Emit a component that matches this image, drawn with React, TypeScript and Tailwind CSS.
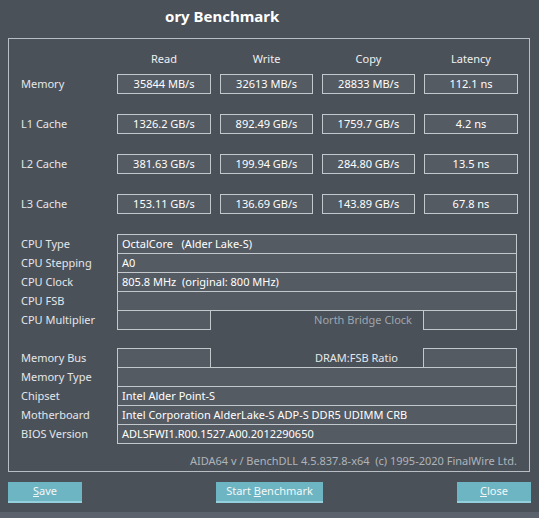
import React from 'react';

const cols = ['Read', 'Write', 'Copy', 'Latency'];

const bench: { label: string; values: string[] }[] = [
  { label: 'Memory', values: ['35844 MB/s', '32613 MB/s', '28833 MB/s', '112.1 ns'] },
  { label: 'L1 Cache', values: ['1326.2 GB/s', '892.49 GB/s', '1759.7 GB/s', '4.2 ns'] },
  { label: 'L2 Cache', values: ['381.63 GB/s', '199.94 GB/s', '284.80 GB/s', '13.5 ns'] },
  { label: 'L3 Cache', values: ['153.11 GB/s', '136.69 GB/s', '143.89 GB/s', '67.8 ns'] },
];

const Box: React.FC<{ children?: React.ReactNode }> = ({ children }) => (
  <div className="h-[20px] border border-[#c3c8cd] bg-[#555b63] flex items-center justify-center text-white">
    {children}
  </div>
);

const InfoRow: React.FC<{ label: string; value?: string; first?: boolean }> = ({ label, value, first }) => (
  <div className={`flex items-stretch h-[20px] ${first ? '' : '-mt-px'}`}>
    <div className="w-[96px] flex items-center">{label}</div>
    <div className="w-[400px] border border-[#c3c8cd] bg-[#555b63] flex items-center pl-[4px] text-white whitespace-pre">{value}</div>
  </div>
);

const Button: React.FC<{ mnemonic: string; rest: string; pre?: string; className: string }> = ({ mnemonic, rest, pre, className }) => (
  <button className={`h-[21px] bg-[#6db5c3] border-b-2 border-[#93d0dc] text-[#f2f7f8] text-[11px] ${className}`}>
    {pre}
    <span className="underline">{mnemonic}</span>
    {rest}
  </button>
);

export default function App() {
  return (
    <div
      className="w-[539px] h-[518px] bg-[#4b5159] text-[#e4e7ea] text-[11px] overflow-hidden flex flex-col"
      style={{ fontFamily: '"Noto Sans", "Open Sans", sans-serif' }}
    >
      <div className="h-[38px] pl-[165px] pt-[5px] text-[15px] font-bold text-white">ory Benchmark</div>

      <div className="ml-[8px] w-[522px] h-[434px] border border-[#b9bec4] px-[12px] pt-[10px] flex flex-col">
        <div className="grid grid-cols-[87px_94px_93px_93px_94px] gap-x-[9px] h-[20px] items-center text-[#eef0f2]">
          <div />
          {cols.map((c) => (
            <div key={c} className="text-center">{c}</div>
          ))}
        </div>

        <div className="flex flex-col gap-[20px] mt-[5px]">
          {bench.map((row) => (
            <div key={row.label} className="grid grid-cols-[87px_94px_93px_93px_94px] gap-x-[9px] items-center">
              <div>{row.label}</div>
              {row.values.map((v, i) => (
                <Box key={i}>{v}</Box>
              ))}
            </div>
          ))}
        </div>

        <div className="mt-[20px] flex flex-col">
          <InfoRow first label="CPU Type" value="OctalCore   (Alder Lake-S)" />
          <InfoRow label="CPU Stepping" value="A0" />
          <InfoRow label="CPU Clock" value="805.8 MHz  (original: 800 MHz)" />
          <InfoRow label="CPU FSB" />
          <div className="flex items-stretch h-[20px] -mt-px">
            <div className="w-[96px] flex items-center">CPU Multiplier</div>
            <div className="w-[94px] border border-[#c3c8cd] bg-[#555b63]" />
            <div className="w-[212px] flex items-center justify-end pr-[11px] text-[#9ea6ae]">North Bridge Clock</div>
            <div className="w-[94px] border border-[#c3c8cd] bg-[#555b63]" />
          </div>

          <div className="flex items-stretch h-[20px] mt-[18px]">
            <div className="w-[96px] flex items-center">Memory Bus</div>
            <div className="w-[94px] border border-[#c3c8cd] bg-[#555b63]" />
            <div className="w-[212px] flex items-center justify-end pr-[25px]">DRAM:FSB Ratio</div>
            <div className="w-[94px] border border-[#c3c8cd] bg-[#555b63]" />
          </div>
          <InfoRow label="Memory Type" />
          <InfoRow label="Chipset" value="Intel Alder Point-S" />
          <InfoRow label="Motherboard" value="Intel Corporation AlderLake-S ADP-S DDR5 UDIMM CRB" />
          <InfoRow label="BIOS Version" value="ADLSFWI1.R00.1527.A00.2012290650" />
        </div>

        <div className="mt-[9px] text-right text-[#aeb4ba] whitespace-pre">
          {'AIDA64 v / BenchDLL 4.5.837.8-x64  (c) 1995-2020 FinalWire Ltd.'}
        </div>
      </div>

      <div className="flex items-start mt-[10px] h-[30px]">
        <Button className="ml-[8px] w-[74px]" mnemonic="S" rest="ave" />
        <Button className="ml-[134px] w-[107px]" pre="Start " mnemonic="B" rest="enchmark" />
        <Button className="ml-[134px] w-[74px]" mnemonic="C" rest="lose" />
      </div>

      <div className="flex-1 bg-[#5b626b]" />
    </div>
  );
}
